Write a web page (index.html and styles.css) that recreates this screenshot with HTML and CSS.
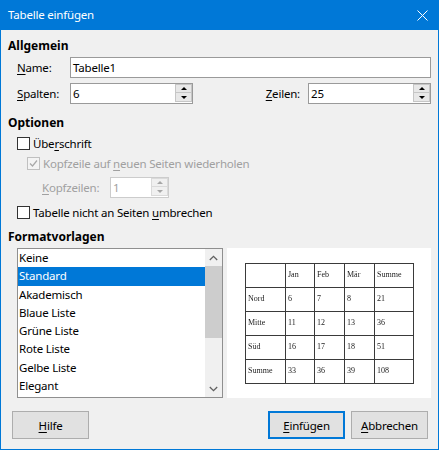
FILE: index.html
```html
<!DOCTYPE html>
<html lang="de">
<head>
<meta charset="utf-8">
<title>Tabelle einfügen</title>
<link rel="stylesheet" href="styles.css">
</head>
<body>
<div class="window">
  <div class="titlebar">
    <span class="title">Tabelle einfügen</span>
    <svg class="close" width="11" height="11" viewBox="0 0 11 11"><path d="M0.5 0.5 L10.5 10.5 M10.5 0.5 L0.5 10.5" stroke="#fff" stroke-width="1" fill="none"/></svg>
  </div>
  <div class="content">
    <div class="heading">Allgemein</div>
    <div class="row row-name">
      <span class="lbl"><u>N</u>ame:</span>
      <div class="input input-name">Tabelle1</div>
    </div>
    <div class="row row-spalten">
      <span class="lbl"><u>S</u>palten:</span>
      <div class="spin">
        <div class="spin-val">6</div>
        <div class="spin-btns"><span class="sb up"></span><span class="sb down"></span></div>
      </div>
      <span class="lbl lbl-z"><u>Z</u>eilen:</span>
      <div class="spin">
        <div class="spin-val">25</div>
        <div class="spin-btns"><span class="sb up"></span><span class="sb down"></span></div>
      </div>
    </div>

    <div class="heading heading-opt">Optionen</div>
    <div class="check-row">
      <span class="cb"></span><span>Übe<u>r</u>schrift</span>
    </div>
    <div class="check-row check-sub disabled">
      <span class="cb cb-dis"><svg width="11" height="11" viewBox="0 0 11 11"><path d="M2 5.5 L4.5 8 L9 2.5" stroke="#a8a8a8" stroke-width="1.2" fill="none"/></svg></span><span>Kopfzeile auf <u>n</u>euen Seiten wiederholen</span>
    </div>
    <div class="row row-kopf disabled">
      <span class="lbl lbl-kopf"><u>K</u>opfzeilen:</span>
      <div class="spin spin-small spin-dis">
        <div class="spin-val">1</div>
        <div class="spin-btns"><span class="sb up"></span><span class="sb down"></span></div>
      </div>
    </div>
    <div class="check-row check-last">
      <span class="cb"></span><span>Tabelle nicht an Seiten <u>u</u>mbrechen</span>
    </div>

    <div class="heading heading-fmt">Formatvorlagen</div>
    <div class="lists">
      <div class="listbox">
        <div class="items">
          <div class="item">Keine</div>
          <div class="item selected">Standard</div>
          <div class="item">Akademisch</div>
          <div class="item">Blaue Liste</div>
          <div class="item">Grüne Liste</div>
          <div class="item">Rote Liste</div>
          <div class="item">Gelbe Liste</div>
          <div class="item">Elegant</div>
        </div>
        <div class="scrollbar">
          <div class="sarrow"><svg width="9" height="6" viewBox="0 0 9 6"><path d="M0.8 5 L4.5 1.3 L8.2 5" stroke="#606060" stroke-width="1.3" fill="none"/></svg></div>
          <div class="thumb"></div>
          <div class="track"></div>
          <div class="sarrow"><svg width="9" height="6" viewBox="0 0 9 6"><path d="M0.8 1 L4.5 4.7 L8.2 1" stroke="#606060" stroke-width="1.3" fill="none"/></svg></div>
        </div>
      </div>
      <div class="preview">
        <div class="ptable">
          <div class="c"></div><div class="c">Jan</div><div class="c">Feb</div><div class="c">Mär</div><div class="c">Summe</div>
          <div class="c">Nord</div><div class="c">6</div><div class="c">7</div><div class="c">8</div><div class="c">21</div>
          <div class="c">Mitte</div><div class="c">11</div><div class="c">12</div><div class="c">13</div><div class="c">36</div>
          <div class="c">Süd</div><div class="c">16</div><div class="c">17</div><div class="c">18</div><div class="c">51</div>
          <div class="c">Summe</div><div class="c">33</div><div class="c">36</div><div class="c">39</div><div class="c">108</div>
        </div>
      </div>
    </div>
  </div>
  <div class="footer">
    <div class="btn"><span><u>H</u>ilfe</span></div>
    <div class="btn btn-default btn-push"><span><u>E</u>infügen</span></div>
    <div class="btn"><span><u>A</u>bbrechen</span></div>
  </div>
</div>
</body>
</html>
```
FILE: styles.css
```css
* { box-sizing: border-box; }
html, body { margin: 0; padding: 0; }
body {
  width: 439px;
  height: 450px;
  overflow: hidden;
  background: #f0f0f0;
  font-family: "Noto Sans", "Segoe UI", sans-serif;
  font-size: 11.5px;
  letter-spacing: -0.2px;
  color: #000;
}
u { text-decoration: underline; text-underline-offset: 2px; text-decoration-thickness: 1px; }

.window {
  width: 439px;
  height: 450px;
  border: 1px solid #0078d7;
  border-top: 0;
  display: flex;
  flex-direction: column;
  background: #f0f0f0;
}
.titlebar {
  height: 30px;
  flex: none;
  background: #0078d7;
  color: #fff;
  display: flex;
  align-items: center;
  padding-left: 7px;
}
.title { line-height: 30px; }
.close { margin-left: auto; margin-right: 10px; }

.content { padding: 6px 7px 0 7px; }
.heading { height: 20px; line-height: 20px; font-weight: bold; font-size: 12px; letter-spacing: 0; }
.heading-opt { margin-top: 9px; }
.heading-fmt { margin-top: 5px; }

.row { display: flex; align-items: center; padding-left: 9px; height: 21px; }
.row-name { margin-top: 1px; }
.row-spalten { margin-top: 5px; }
.lbl { width: 53px; flex: none; line-height: 20px; }
.lbl-z { width: auto; margin-left: auto; margin-right: 8px; }

.input {
  height: 21px;
  border: 1px solid #9a9a9a;
  background: #fff;
  padding-left: 2px;
  line-height: 19px;
}
.input-name { flex: 1; }

.spin {
  width: 123px;
  height: 21px;
  flex: none;
  display: flex;
  border: 1px solid #9a9a9a;
  background: #fff;
}
.spin-val { flex: 1; padding-left: 2px; line-height: 19px; }
.spin-btns {
  width: 17px;
  display: flex;
  flex-direction: column;
  padding-bottom: 1px;
}
.sb {
  height: 9px;
  background: #e8e8e8;
  border: 1px solid #c6c6c6;
  display: flex;
  align-items: center;
  justify-content: center;
}
.sb + .sb { border-top: 0; height: 9px; }
.sb.up::after {
  content: "";
  border-left: 3px solid transparent;
  border-right: 3px solid transparent;
  border-bottom: 3px solid #000;
}
.sb.down::after {
  content: "";
  border-left: 3px solid transparent;
  border-right: 3px solid transparent;
  border-top: 3px solid #000;
}

.check-row { display: flex; align-items: center; gap: 3px; height: 20px; padding-left: 9px; }
.check-sub { padding-left: 19px; }
.check-last { margin-top: 4px; }
.cb {
  width: 13px;
  height: 13px;
  flex: none;
  border: 1px solid #333;
  background: #fff;
  display: flex;
  align-items: center;
  justify-content: center;
}
.cb-dis { border-color: #c0c0c0; background: #f4f4f4; }
.disabled { color: #a0a0a0; }

.row-kopf { margin-top: 4px; padding-left: 34px; }
.lbl-kopf { width: 68px; }
.spin-small { width: 59px; }
.spin-dis { border-color: #cccccc; }
.spin-dis .sb { background: #f0f0f0; border-color: #dadada; }
.spin-dis .sb.up::after { border-bottom-color: #a6a6a6; }
.spin-dis .sb.down::after { border-top-color: #a6a6a6; }

.lists { display: flex; gap: 4px; padding-left: 9px; margin-top: 1px; height: 150px; }
.listbox {
  width: 206px;
  border: 1px solid #8f8f8f;
  background: #fff;
  display: flex;
}
.items { flex: 1; }
.item { height: 18.3px; line-height: 18.3px; padding-left: 1px; white-space: nowrap; }
.item.selected { background: #0078d7; color: #fff; }
.scrollbar { width: 17px; background: #f0f0f0; display: flex; flex-direction: column; }
.sarrow { height: 17px; display: flex; align-items: center; justify-content: center; flex: none; }
.thumb { height: 72px; background: #cdcdcd; flex: none; }
.track { flex: 1; }

.preview { width: 204px; background: #fff; padding: 15px 0 0 18px; }
.ptable {
  display: grid;
  grid-template-columns: 39px 28px 29px 29px 38px;
  grid-template-rows: repeat(5, 23px);
  gap: 1px;
  padding: 1px;
  width: 169px;
  background: #3a3a3a;
  font-family: "Liberation Serif", serif;
  font-size: 8px;
  letter-spacing: 0;
  filter: grayscale(1);
}
.c {
  background: #fff;
  padding: 0 0 3px 2px;
  display: flex;
  align-items: center;
  color: #222;
}

.footer {
  margin-top: auto;
  display: flex;
  gap: 6px;
  padding: 0 10px 10px 11px;
}
.btn {
  width: 77px;
  height: 28px;
  background: #e1e1e1;
  border: 1px solid #adadad;
  display: flex;
  align-items: center;
  justify-content: center;
}
.btn-push { margin-left: auto; }
.btn-default { border-color: #0078d7; box-shadow: inset 0 0 0 1px #0078d7; }
```
